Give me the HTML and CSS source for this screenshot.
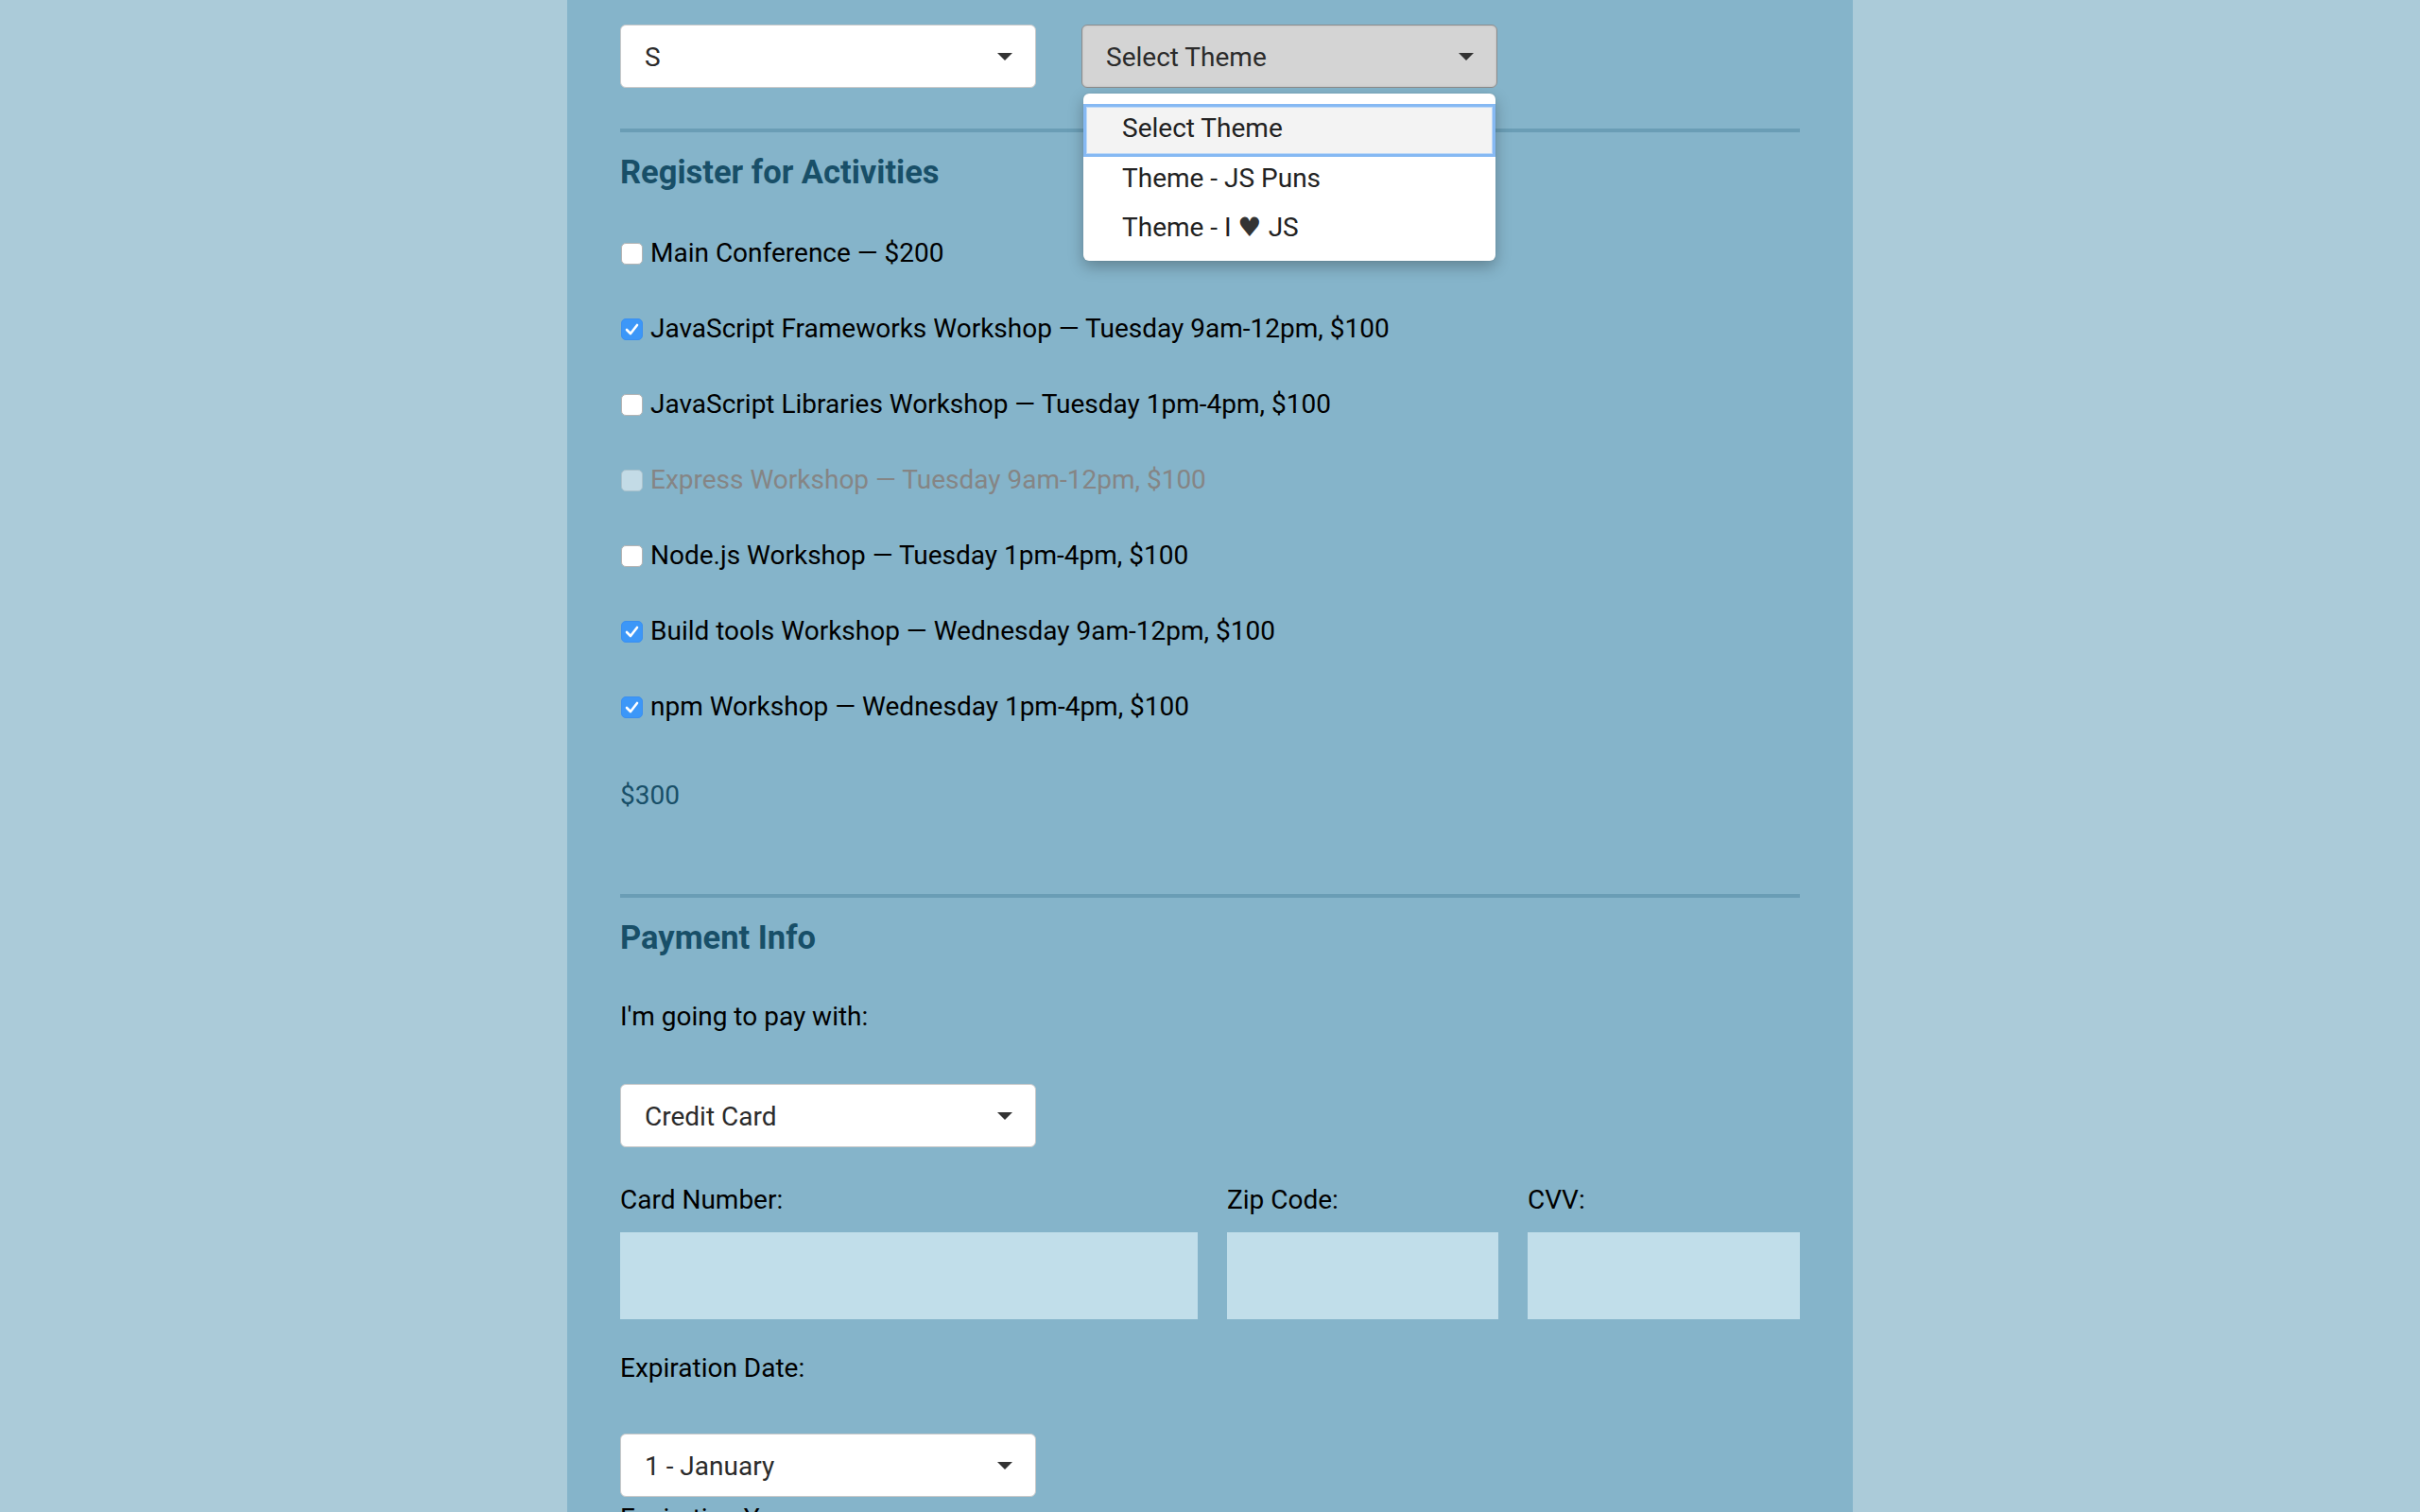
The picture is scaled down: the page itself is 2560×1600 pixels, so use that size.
FILE: index.html
```html
<!DOCTYPE html>
<html lang="en">
<head>
<meta charset="utf-8">
<title>Conference Registration</title>
<link rel="stylesheet" href="styles.css">
</head>
<body>
<form class="container">
  <div class="shirt-row">
    <div class="select"><span class="select-text">S</span><svg class="caret" width="16" height="8" viewBox="0 0 16 8"><path d="M0 0H16L8 8Z" fill="#333"/></svg></div>
    <div class="theme-wrap">
      <div class="select select-open"><span class="select-text">Select Theme</span><svg class="caret" width="16" height="8" viewBox="0 0 16 8"><path d="M0 0H16L8 8Z" fill="#333"/></svg></div>
      <ul class="dropdown">
        <li class="option option-active">Select Theme</li>
        <li class="option option-2">Theme - JS Puns</li>
        <li class="option option-3">Theme - I <span class="heart">♥</span> JS</li>
      </ul>
    </div>
  </div>

  <hr class="rule rule-first">
  <h2 class="legend">Register for Activities</h2>

  <div class="activities">
    <label class="activity"><span class="box"></span>Main Conference — $200</label>
    <label class="activity"><span class="box box-checked"><svg width="15" height="13" viewBox="0 0 15 13"><path d="M2 7L6 11L13 2" fill="none" stroke="#fff" stroke-width="2.6" stroke-linecap="round" stroke-linejoin="round"/></svg></span>JavaScript Frameworks Workshop — Tuesday 9am-12pm, $100</label>
    <label class="activity"><span class="box"></span>JavaScript Libraries Workshop — Tuesday 1pm-4pm, $100</label>
    <label class="activity activity-disabled"><span class="box box-disabled"></span>Express Workshop — Tuesday 9am-12pm, $100</label>
    <label class="activity"><span class="box"></span>Node.js Workshop — Tuesday 1pm-4pm, $100</label>
    <label class="activity"><span class="box box-checked"><svg width="15" height="13" viewBox="0 0 15 13"><path d="M2 7L6 11L13 2" fill="none" stroke="#fff" stroke-width="2.6" stroke-linecap="round" stroke-linejoin="round"/></svg></span>Build tools Workshop — Wednesday 9am-12pm, $100</label>
    <label class="activity"><span class="box box-checked"><svg width="15" height="13" viewBox="0 0 15 13"><path d="M2 7L6 11L13 2" fill="none" stroke="#fff" stroke-width="2.6" stroke-linecap="round" stroke-linejoin="round"/></svg></span>npm Workshop — Wednesday 1pm-4pm, $100</label>
  </div>

  <p class="total">$300</p>

  <hr class="rule rule-second">
  <h2 class="legend">Payment Info</h2>

  <label class="label pay-label">I'm going to pay with:</label>
  <div class="select pay-select"><span class="select-text">Credit Card</span><svg class="caret" width="16" height="8" viewBox="0 0 16 8"><path d="M0 0H16L8 8Z" fill="#333"/></svg></div>

  <div class="card-grid">
    <div class="field">
      <label class="label">Card Number:</label>
      <input class="text-input" type="text">
    </div>
    <div class="field">
      <label class="label">Zip Code:</label>
      <input class="text-input" type="text">
    </div>
    <div class="field">
      <label class="label">CVV:</label>
      <input class="text-input" type="text">
    </div>
  </div>

  <label class="label exp-label">Expiration Date:</label>
  <div class="select exp-select"><span class="select-text">1 - January</span><svg class="caret" width="16" height="8" viewBox="0 0 16 8"><path d="M0 0H16L8 8Z" fill="#333"/></svg></div>
  <label class="label year-label">Expiration Year:</label>
  <div class="select year-select"><span class="select-text">2016</span><svg class="caret" width="16" height="8" viewBox="0 0 16 8"><path d="M0 0H16L8 8Z" fill="#333"/></svg></div>
</form>
</body>
</html>
```

FILE: styles.css
```css
html, body {
  margin: 0;
  padding: 0;
}

body {
  background: #abcbd9;
  font-family: Roboto, "Liberation Sans", Arial, sans-serif;
  font-size: 28px;
  color: #000;
  height: 1600px;
  overflow: hidden;
}

.container {
  width: 1360px;
  box-sizing: border-box;
  margin: 0 auto;
  padding: 26px 56px 200px;
  background: #85b4ca;
  min-height: 1600px;
}

/* selects */
.shirt-row {
  display: flex;
  gap: 48px;
  align-items: flex-start;
}

.select {
  box-sizing: border-box;
  width: 440px;
  height: 67px;
  background: #fff;
  border: 1px solid #c9c9c9;
  border-radius: 6px;
  padding: 0 24px 0 25px;
  display: flex;
  align-items: center;
  justify-content: space-between;
  color: #2b2b2b;
}

.select-text {
  line-height: 65px;
  margin-top: 1px;
}

.caret {
  display: block;
  flex: none;
}

.theme-wrap {
  position: relative;
  width: 440px;
}

.select-open {
  background: #d4d4d4;
  border: 1px solid #8c8c8c;
  box-shadow: inset 0 0 2px rgba(0, 0, 0, 0.15);
}

.dropdown {
  position: absolute;
  left: 2px;
  top: 73px;
  width: 436px;
  margin: 0;
  padding: 11px 0 6px;
  list-style: none;
  background: #fff;
  border-radius: 6px;
  box-shadow: 0 6px 16px rgba(0, 0, 0, 0.28), 0 0 1px rgba(0, 0, 0, 0.25);
  color: #222;
  z-index: 5;
}

.option {
  box-sizing: border-box;
  padding-left: 41px;
  height: 52px;
  line-height: 45px;
}

.option-active {
  height: 56px;
  line-height: 45px;
  padding-left: 38px;
  background: #f3f3f3;
  border: 3px solid #86b9f3;
  box-shadow: inset 0 0 0 1px #bcd8f7;
}

.heart {
  font-family: "DejaVu Sans", sans-serif;
  color: #333;
}

/* rules & headings */
.rule {
  border: 0;
  height: 4px;
  background: #6a9db5;
  margin: 0;
}

.rule-first {
  margin-top: 43px;
}

.rule-second {
  margin-top: 88px;
}

.legend {
  margin: 22px 0 0;
  font-size: 34.5px;
  line-height: 40px;
  font-weight: 700;
  color: #184f68;
}

/* activities */
.activities {
  margin-top: 50px;
  display: flex;
  flex-direction: column;
  gap: 48px;
}

.activity {
  display: flex;
  align-items: center;
  height: 32px;
  line-height: 32px;
  white-space: nowrap;
}

.box {
  box-sizing: border-box;
  flex: none;
  width: 23px;
  height: 23px;
  margin: 1px 8px 0 1px;
  background: #fff;
  border: 1px solid #b4b4b4;
  border-radius: 5px;
  display: flex;
  align-items: center;
  justify-content: center;
}

.box-checked {
  background: #3c97f8;
  border-color: #3a8ff0;
}

.box-disabled {
  background: #c3dbe6;
  border-color: #aac2cd;
}

.activity-disabled {
  color: #858585;
}

.total {
  margin: 62px 0 0;
  line-height: 32px;
  color: #184f68;
}

/* payment */
.label {
  display: block;
  line-height: 32px;
}

.pay-label {
  margin-top: 48px;
}

.pay-select {
  margin-top: 55px;
}

.card-grid {
  margin-top: 40px;
  display: grid;
  grid-template-columns: 611px 287px 288px;
  column-gap: 31px;
}

.field {
  display: flex;
  flex-direction: column;
}

.text-input {
  margin-top: 18px;
  box-sizing: border-box;
  width: 100%;
  height: 92px;
  border: 0;
  border-radius: 0;
  background: #c1deea;
  padding: 0 16px;
  font: inherit;
  outline: none;
}

.exp-label {
  margin-top: 36px;
}

.exp-select {
  margin-top: 53px;
}

.year-label {
  margin-top: 7px;
}

.year-select {
  margin-top: 20px;
}
```
